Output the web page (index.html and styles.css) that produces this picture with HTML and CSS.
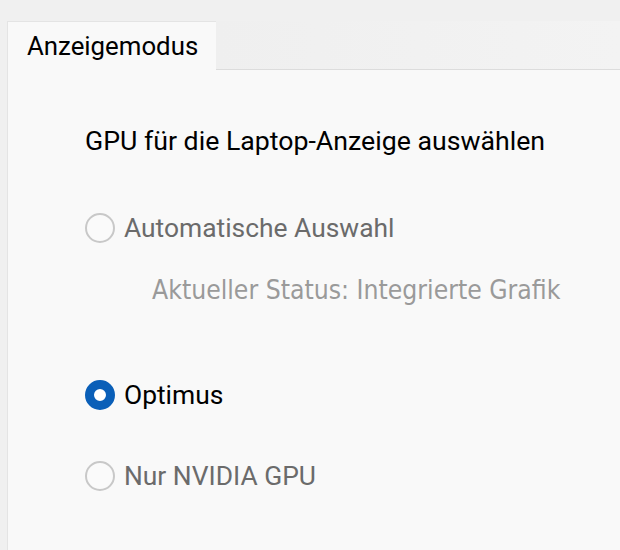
FILE: index.html
```html
<!DOCTYPE html>
<html lang="de">
<head>
<meta charset="utf-8">
<link rel="stylesheet" href="styles.css">
</head>
<body>
<div class="window">
  <div class="tabs">
    <div class="tab active">Anzeigemodus</div>
    <div class="tab-fill"></div>
  </div>
  <div class="panel">
    <div class="heading">GPU für die Laptop-Anzeige auswählen</div>
    <div class="option disabled first">
      <span class="radio"></span>
      <span class="label">Automatische Auswahl</span>
    </div>
    <div class="status">Aktueller Status: Integrierte Grafik</div>
    <div class="option checked">
      <span class="radio"></span>
      <span class="label">Optimus</span>
    </div>
    <div class="option disabled">
      <span class="radio"></span>
      <span class="label">Nur NVIDIA GPU</span>
    </div>
  </div>
</div>
</body>
</html>
```
FILE: styles.css
```css
html, body {
  margin: 0;
  padding: 0;
  background: #f0f0f0;
  height: 100%;
  overflow: hidden;
}
.window {
  padding: 21px 0 0 7px;
  height: 100%;
  box-sizing: border-box;
  display: flex;
  flex-direction: column;
  font-family: Roboto, "Open Sans", sans-serif;
}
.tabs {
  display: flex;
  height: 49px;
}
.tab {
  width: 209px;
  box-sizing: border-box;
  background: #f9f9f9;
  border-top: 1px solid #e4e4e4;
  border-left: 1px solid #e4e4e4;
  padding: 9px 0 0 19px;
  font-size: 25.8px;
  line-height: 30px;
  color: #000;
}
.tab-fill {
  flex: 1;
  background: linear-gradient(to right, #efefef, #f3f3f3);
  border-bottom: 1px solid #dcdcdc;
}
.panel {
  flex: 1;
  background: #f9f9f9;
  border-left: 1px solid #e4e4e4;
  padding: 56px 0 0 77px;
}
.heading {
  font-size: 26.7px;
  color: #000;
  height: 30px;
  line-height: 30px;
}
.option {
  display: flex;
  align-items: center;
  height: 32px;
  gap: 9px;
  font-size: 26.4px;
}
.option.first {
  margin-top: 56px;
}
.radio {
  width: 30px;
  height: 30px;
  box-sizing: border-box;
  border-radius: 50%;
  border: 2px solid #c8c8c8;
  background: #fafafa;
  flex: none;
}
.option.disabled .label {
  color: #6b6b6b;
}
.option.checked .radio {
  border: 9px solid #0a5fb8;
  background: #fff;
}
.option.checked .label {
  color: #000;
}
.status {
  font-family: "DejaVu Sans", sans-serif;
  font-stretch: condensed;
  font-size: 26.3px;
  color: #9a9a9a;
  margin: 31px 0 74px 67px;
  line-height: 30px;
  white-space: nowrap;
}
.option.checked {
  margin-bottom: 49px;
}
```
